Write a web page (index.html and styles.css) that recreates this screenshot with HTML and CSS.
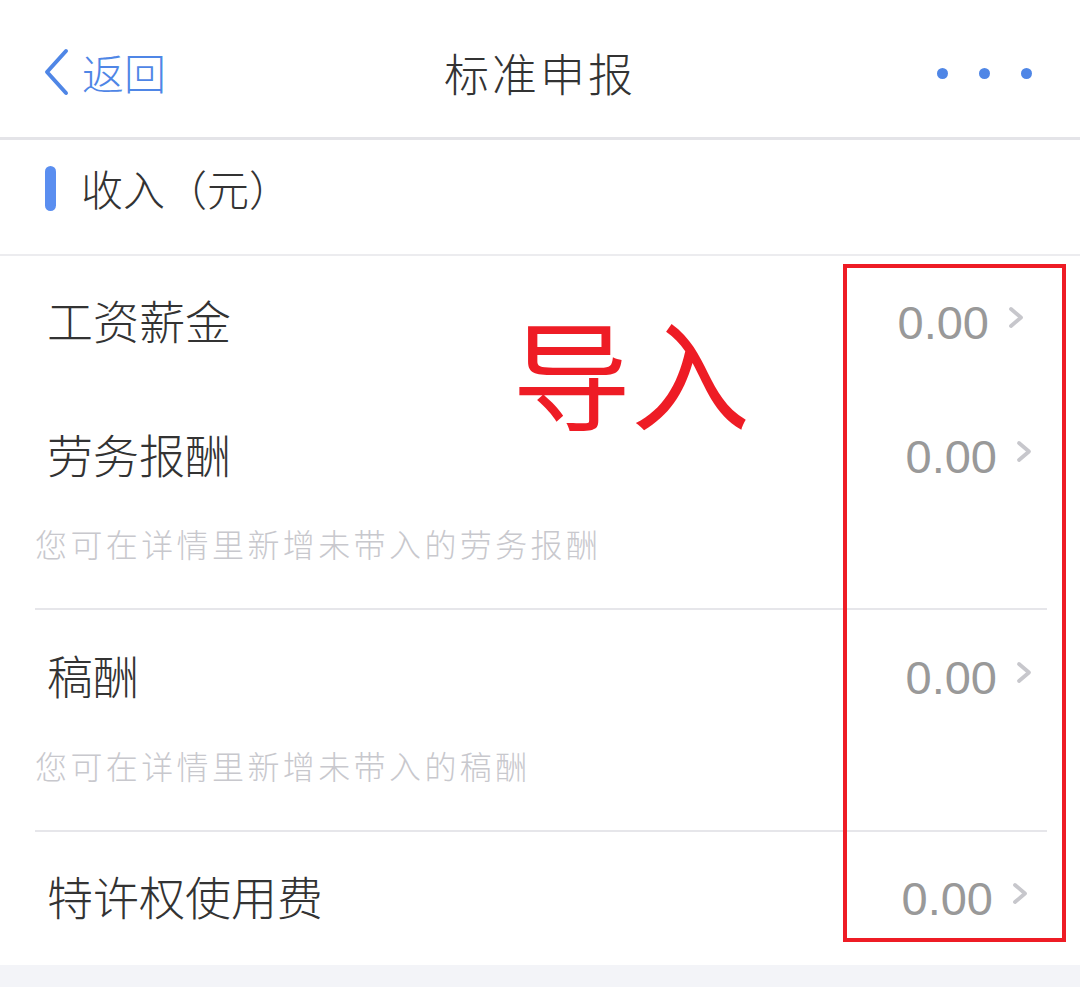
FILE: index.html
```html
<!DOCTYPE html>
<html lang="zh-CN">
<head>
<meta charset="utf-8">
<title>标准申报</title>
<link rel="stylesheet" href="styles.css">
</head>
<body>
<div class="page">
  <header class="nav">
    <div class="back">
      <svg class="back-icon" width="28" height="48" viewBox="0 0 28 48"><path d="M24 3 L5 24 L24 45" fill="none" stroke="#4f86e6" stroke-width="4" stroke-linecap="round" stroke-linejoin="round"/></svg>
      <span class="back-text">返回</span>
    </div>
    <div class="title">标准申报</div>
    <div class="more"><i></i><i></i><i></i></div>
  </header>

  <section class="section-head">
    <span class="bar"></span>
    <span class="section-title">收入（元）</span>
  </section>

  <div class="list">
    <div class="group">
      <div class="row r1">
        <span class="label">工资薪金</span>
        <span class="value">0.00</span>
        <svg class="chev" width="18" height="24" viewBox="0 0 18 24"><path d="M3 3 L13 11.5 L3 20" fill="none" stroke="#c7c7cc" stroke-width="3.8" stroke-linecap="round" stroke-linejoin="round"/></svg>
      </div>
      <div class="row">
        <span class="label">劳务报酬</span>
        <span class="value">0.00</span>
        <svg class="chev" width="18" height="24" viewBox="0 0 18 24"><path d="M3 3 L13 11.5 L3 20" fill="none" stroke="#c7c7cc" stroke-width="3.8" stroke-linecap="round" stroke-linejoin="round"/></svg>
      </div>
      <div class="hint">您可在详情里新增未带入的劳务报酬</div>
    </div>
    <div class="group">
      <div class="row row-tall">
        <span class="label">稿酬</span>
        <span class="value">0.00</span>
        <svg class="chev" width="18" height="24" viewBox="0 0 18 24"><path d="M3 3 L13 11.5 L3 20" fill="none" stroke="#c7c7cc" stroke-width="3.8" stroke-linecap="round" stroke-linejoin="round"/></svg>
      </div>
      <div class="hint">您可在详情里新增未带入的稿酬</div>
    </div>
    <div class="group group-last">
      <div class="row r4">
        <span class="label">特许权使用费</span>
        <span class="value">0.00</span>
        <svg class="chev" width="18" height="24" viewBox="0 0 18 24"><path d="M3 3 L13 11.5 L3 20" fill="none" stroke="#c7c7cc" stroke-width="3.8" stroke-linecap="round" stroke-linejoin="round"/></svg>
      </div>
    </div>
  </div>
  <div class="footer-gap"></div>

  <div class="annot-box"></div>
  <div class="annot-text">导入</div>
</div>
</body>
</html>
```

FILE: styles.css
```css
* { box-sizing: border-box; }
html, body { margin: 0; padding: 0; background: #ffffff; }
body {
  font-family: "Noto Sans CJK SC", "Noto Sans", sans-serif;
  font-weight: 300;
  color: #333333;
}
.page {
  position: relative;
  width: 1080px;
  height: 987px;
  overflow: hidden;
  background: #ffffff;
}
.nav {
  height: 140px;
  display: flex;
  align-items: center;
  justify-content: space-between;
  padding: 0 42px 0 42px;
  border-bottom: 3px solid #e4e4e8;
  position: relative;
}
.back {
  display: flex;
  align-items: center;
  gap: 12px;
  color: #4f86e6;
  margin-top: 6px;
}
.back-icon { display: block; }
.back-text {
  font-size: 42px;
  line-height: 48px;
}
.title {
  position: absolute;
  left: 0;
  right: 0;
  text-align: center;
  font-size: 45px;
  line-height: 50px;
  letter-spacing: 3px;
  color: #333333;
  pointer-events: none;
  top: 48px;
}
.more {
  display: flex;
  gap: 31px;
  align-items: center;
  margin-top: 10px;
  margin-right: 6px;
}
.more i {
  display: block;
  width: 11px;
  height: 11px;
  border-radius: 50%;
  background: #4f86e6;
}
.section-head {
  height: 116px;
  display: flex;
  align-items: center;
  padding-left: 45px;
  padding-bottom: 18px;
  border-bottom: 2px solid #ececef;
}
.bar {
  width: 11px;
  height: 45px;
  border-radius: 6px;
  background: #5a8ef0;
  margin-right: 25px;
}
.section-title {
  font-size: 42px;
  line-height: 48px;
  color: #333333;
}
.list { display: flex; flex-direction: column; }
.group {
  border-bottom: 2px solid #e6e6ea;
  margin: 0 33px 0 35px;
}
.group-last { border-bottom: none; }
.row {
  height: 134px;
  display: flex;
  align-items: center;
  padding-left: 12px;
  padding-right: 13px;
}
.r1 { padding-right: 21px; }
.r4 { padding-right: 17px; }
.row-tall { height: 136px; }
.label {
  flex: 1;
  font-size: 46px;
  line-height: 50px;
  margin-bottom: 8px;
  color: #333333;
}
.value {
  font-family: "Liberation Sans", "Roboto", sans-serif;
  font-weight: 400;
  font-size: 47px;
  line-height: 50px;
  color: #999999;
  margin-right: 19px;
}
.chev { display: block; margin-top: -10px; }
.hint {
  font-size: 32px;
  line-height: 38px;
  color: #c8c8cd;
  padding-bottom: 46px;
  letter-spacing: 3.4px;
}
.footer-gap {
  height: 22px;
  background: #f3f4f8;
  position: absolute;
  left: 0;
  right: 0;
  bottom: 0;
}
.annot-box {
  position: absolute;
  left: 843px;
  top: 264px;
  width: 223px;
  height: 678px;
  border: 4px solid #ee1c25;
}
.annot-text {
  position: absolute;
  left: 512px;
  top: 300px;
  font-size: 119px;
  line-height: 140px;
  font-weight: 400;
  color: #ee1c25;
}
```
